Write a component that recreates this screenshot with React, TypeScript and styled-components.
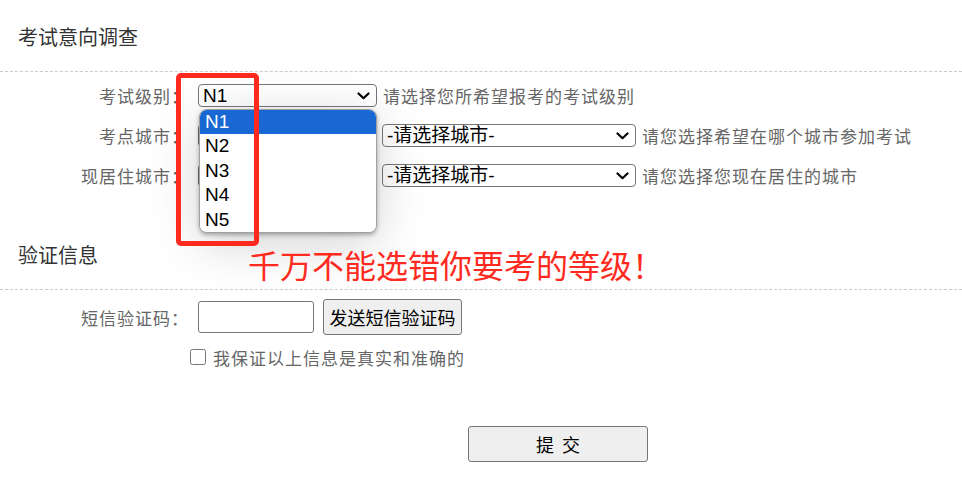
import React from 'react'
import styled, { createGlobalStyle } from 'styled-components'

const GlobalStyle = createGlobalStyle`
  body {
    margin: 0;
    background: #fff;
    font-family: "Noto Sans CJK SC", "Liberation Sans", sans-serif;
  }
`

const Page = styled.div`
  position: relative;
  width: 962px;
  height: 488px;
  overflow: hidden;
`

const SectionHead = styled.div<{ $top?: number }>`
  margin-top: ${(p) => p.$top || 0}px;
  padding: 24px 18px 21px;
  font-size: 20px;
  line-height: 26px;
  color: #333;
  border-bottom: 1px dashed #ccc;
`

const Form = styled.div<{ $pad: number }>`
  padding-top: ${(p) => p.$pad}px;
`

const Row = styled.div`
  display: flex;
  align-items: center;
  height: 40px;
`

const Label = styled.div`
  width: 189px;
  flex-shrink: 0;
  text-align: right;
  font-size: 17px;
  letter-spacing: 1px;
  color: #666;
`

const Controls = styled.div`
  display: flex;
  align-items: center;
  gap: 5px;
  margin-left: 9px;
`

const SelectWrap = styled.div`
  position: relative;
  display: flex;

  svg {
    position: absolute;
    right: 7px;
    top: 8px;
    pointer-events: none;
  }
`

const Select = styled.select<{ $w: number }>`
  appearance: none;
  width: ${(p) => p.$w}px;
  height: 23px;
  box-sizing: border-box;
  border: 1px solid #767676;
  border-radius: 4px;
  background: #fff;
  color: #000;
  font-family: "Liberation Sans", "Noto Sans CJK SC", sans-serif;
  font-size: 19px;
  line-height: 21px;
  padding: 0 0 0 4px;
`

const Hint = styled.span`
  margin-left: 1px;
  font-size: 17px;
  letter-spacing: 1px;
  color: #666;
`

const Popup = styled.ul`
  position: absolute;
  left: 1px;
  top: 25px;
  width: 178px;
  margin: 0;
  padding: 0;
  list-style: none;
  box-sizing: border-box;
  background: #fff;
  border: 1px solid #a0a0a0;
  border-radius: 8px;
  overflow: hidden;
  box-shadow: 0 2px 4px rgba(0, 0, 0, 0.3), 0 10px 50px rgba(0, 0, 0, 0.18);
  z-index: 5;
`

const Option = styled.li<{ $active?: boolean }>`
  height: 24.5px;
  line-height: 24.5px;
  padding-left: 5px;
  font-family: "Liberation Sans", sans-serif;
  font-size: 19px;
  color: ${(p) => (p.$active ? '#fff' : '#000')};
  background: ${(p) => (p.$active ? '#1967d2' : '#fff')};
`

const TextInput = styled.input`
  width: 116px;
  height: 32px;
  box-sizing: border-box;
  border: 1px solid #767676;
  border-radius: 3px;
  margin-right: 4px;
`

const Button = styled.button<{ $w: number; $h: number }>`
  width: ${(p) => p.$w}px;
  height: ${(p) => p.$h}px;
  box-sizing: border-box;
  border: 1px solid #767676;
  border-radius: 3px;
  background: #efefef;
  color: #000;
  font-family: "Noto Sans CJK SC", sans-serif;
  font-size: 18px;
  padding: 0;
`

const CheckRow = styled.label`
  display: flex;
  align-items: center;
  height: 40px;
  padding-left: 190px;
  font-size: 17px;
  letter-spacing: 1px;
  color: #666;

  input {
    width: 16px;
    height: 16px;
    margin: 0 7px 0 0;
  }
`

const SubmitRow = styled.div`
  padding: 49px 0 0 468px;
`

const RedBox = styled.div`
  position: absolute;
  left: 176px;
  top: 73px;
  width: 83px;
  height: 173px;
  box-sizing: border-box;
  border: 5px solid #fe2a20;
  border-radius: 5px;
  z-index: 6;
`

const Warning = styled.div`
  position: absolute;
  left: 248px;
  top: 243px;
  font-size: 32px;
  line-height: 42px;
  color: #fe2a20;
  z-index: 6;
`

const levels = ['N1', 'N2', 'N3', 'N4', 'N5']

const Chevron = () => (
  <svg width="13" height="8" viewBox="0 0 13 8" fill="none">
    <path d="M1.5 1.5 L6.5 6.2 L11.5 1.5" stroke="#000" strokeWidth="2.2" strokeLinecap="round" strokeLinejoin="round" />
  </svg>
)

const CitySelect = ({ w, text }: { w: number; text: string }) => (
  <SelectWrap>
    <Select $w={w}>
      <option>{text}</option>
    </Select>
    <Chevron />
  </SelectWrap>
)

export default function App() {
  return (
    <Page>
      <GlobalStyle />
      <SectionHead>考试意向调查</SectionHead>
      <Form $pad={3}>
        <Row>
          <Label>考试级别：</Label>
          <Controls>
            <SelectWrap>
              <Select $w={179} defaultValue="N1">
                {levels.map((l) => (
                  <option key={l}>{l}</option>
                ))}
              </Select>
              <Chevron />
              <Popup>
                {levels.map((l, i) => (
                  <Option key={l} $active={i === 0}>
                    {l}
                  </Option>
                ))}
              </Popup>
            </SelectWrap>
            <Hint>请选择您所希望报考的考试级别</Hint>
          </Controls>
        </Row>
        <Row>
          <Label>考点城市：</Label>
          <Controls>
            <CitySelect w={179} text="-请选择省份-" />
            <CitySelect w={254} text="-请选择城市-" />
            <Hint>请您选择希望在哪个城市参加考试</Hint>
          </Controls>
        </Row>
        <Row>
          <Label>现居住城市：</Label>
          <Controls>
            <CitySelect w={179} text="-请选择省份-" />
            <CitySelect w={254} text="-请选择城市-" />
            <Hint>请您选择您现在居住的城市</Hint>
          </Controls>
        </Row>
      </Form>

      <SectionHead $top={23}>验证信息</SectionHead>
      <Form $pad={7}>
        <Row>
          <Label>短信验证码：</Label>
          <Controls>
            <TextInput type="text" />
            <Button $w={139} $h={36}>发送短信验证码</Button>
          </Controls>
        </Row>
        <CheckRow>
          <input type="checkbox" />
          我保证以上信息是真实和准确的
        </CheckRow>
      </Form>
      <SubmitRow>
        <Button $w={180} $h={36}>提&nbsp;&nbsp;交</Button>
      </SubmitRow>

      <RedBox />
      <Warning>千万不能选错你要考的等级！</Warning>
    </Page>
  )
}
